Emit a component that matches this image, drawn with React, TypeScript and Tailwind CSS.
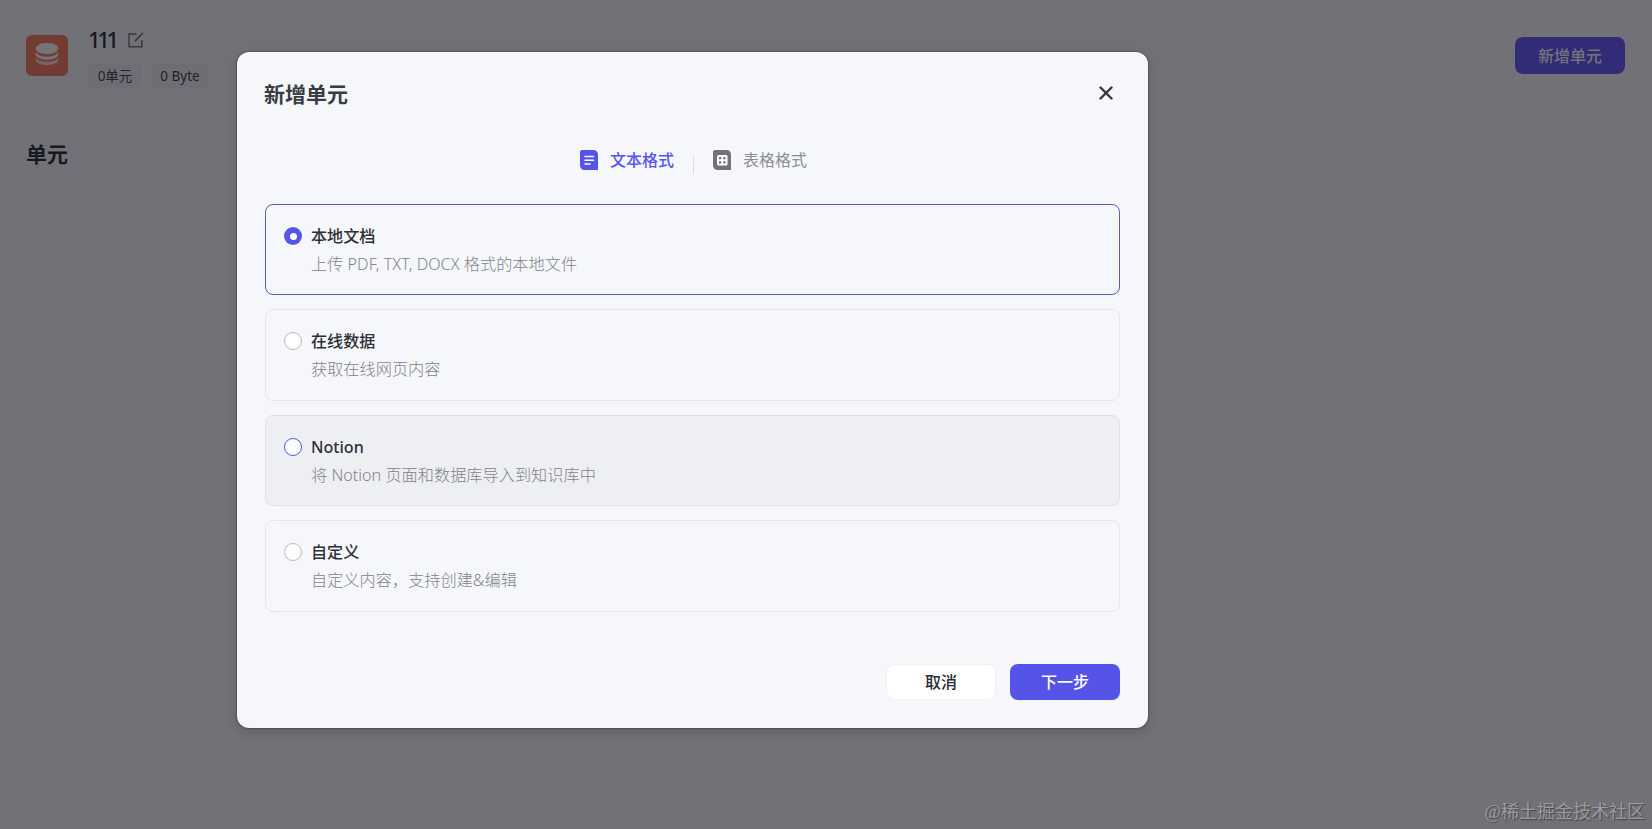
import { useState } from 'react';

interface Source {
  id: string;
  title: string;
  description: string;
}

const sources: Source[] = [
  { id: 'local', title: '本地文档', description: '上传 PDF, TXT, DOCX 格式的本地文件' },
  { id: 'online', title: '在线数据', description: '获取在线网页内容' },
  { id: 'notion', title: 'Notion', description: '将 Notion 页面和数据库导入到知识库中' },
  { id: 'custom', title: '自定义', description: '自定义内容，支持创建&编辑' },
];

function DatabaseIcon() {
  return (
    <svg width="24" height="24" viewBox="0 0 24 24" fill="#fff">
      <ellipse cx="12" cy="6.500" rx="11.300" ry="5.700" />
      <path d="M.7 10c1.600 3.200 5.800 4.700 11.300 4.700s9.700-1.500 11.300-4.700v2.500c0 3-5 5.200-11.300 5.200S.7 15.500.7 12.500z" />
      <path d="M.7 15.800c1.600 2.700 5.800 3.900 11.300 3.900s9.700-1.200 11.300-3.900v2.200c0 2.800-5 5-11.300 5S.7 20.800.7 18z" opacity=".75" />
    </svg>
  );
}

function EditIcon() {
  return (
    <svg width="16" height="16" viewBox="0 0 16 16" fill="none" stroke="#6b6b72" strokeWidth="1.4">
      <path d="M8.500 2H1v12.700h12.800V8" />
      <path d="M7 9.200 14.800 1" strokeWidth="1.800" />
    </svg>
  );
}

function TextIcon() {
  return (
    <svg width="18" height="20" viewBox="0 0 18 20" className="mb-px">
      <path d="M2 0h11q5 0 5 5v15H5q-5 0-5-5V2q0-2 2-2z" fill="#5654e8" />
      <path d="M5 6.500h8.500M5 10.300h8.500M5 14h5" stroke="#fff" strokeWidth="1.600" strokeLinecap="round" />
    </svg>
  );
}

function TableIcon() {
  return (
    <svg width="18" height="20" viewBox="0 0 18 20" className="mb-px">
      <path d="M2 0h11q5 0 5 5v15H5q-5 0-5-5V2q0-2 2-2z" fill="#737377" />
      <rect x="4" y="5" width="10.500" height="10.500" rx="1.500" fill="#fff" />
      <path d="M6 7h2.300v2.300H6zM10.200 7h2.300v2.300h-2.300zM6 11.200h2.300v2.300H6zM10.200 11.200h2.300v2.300h-2.300z" fill="#737377" />
    </svg>
  );
}

function Radio({ checked, hovered }: { checked: boolean; hovered: boolean }) {
  if (checked) {
    return (
      <span className="flex size-[18px] shrink-0 items-center justify-center rounded-full bg-[#5654e8]">
        <span className="size-[7px] rounded-full bg-white" />
      </span>
    );
  }
  return (
    <span
      className={`block size-[18px] shrink-0 rounded-full border bg-white ${
        hovered ? 'border-[#5654e8]' : 'border-[#b9babe]'
      }`}
    />
  );
}

export default function App() {
  const [selected, setSelected] = useState('local');
  const [hovered, setHovered] = useState('notion');

  return (
    <div className="relative h-[829px] overflow-hidden bg-[#fcf9fc] font-['Noto_Sans','Noto_Sans_CJK_SC',sans-serif] text-[#1c1f23]">
      <header className="flex h-[110px] items-start justify-between pl-[26px] pr-[27px]">
        <div className="flex">
          <div className="mt-[35px] flex h-[41px] w-[42px] items-center justify-center rounded-md bg-[#ff7654] pb-1">
            <DatabaseIcon />
          </div>
          <div className="ml-5 pt-[26px]">
            <div className="flex h-[28px] items-center">
              <span className="w-[40px] pb-[2px] text-[22px] font-medium tracking-[-3.300px]">111</span>
              <EditIcon />
            </div>
            <div className="mt-[9px] flex gap-[10px] text-[13.500px] text-[#35373c]">
              <span className="flex h-[25px] w-[54px] items-center justify-center rounded-md bg-[#f3f1f4] pt-px">0单元</span>
              <span className="flex h-[25px] w-[56px] items-center justify-center whitespace-nowrap rounded-md bg-[#f3f1f4] pt-px">
                0 Byte
              </span>
            </div>
          </div>
        </div>
        <button className="mt-[37px] h-[37px] w-[110px] rounded-lg bg-[#5a4dff] text-base font-medium text-white">
          新增单元
        </button>
      </header>
      <h2 className="pl-[26px] pt-[29px] text-[21px] font-bold leading-[30px]">单元</h2>

      <div className="absolute inset-0 bg-[rgba(22,22,30,0.6)]">
        <div className="ml-[237px] mt-[52px] flex h-[676px] w-[911px] flex-col rounded-xl bg-[#f5f7fb] px-7 shadow-[0_0_2px_rgba(0,0,0,0.7),0_4px_14px_rgba(0,0,0,0.15)]">
          <div className="flex items-center justify-between pt-[26px]">
            <h3 className="-ml-px text-[21px] font-bold leading-[32px] text-[#3a3c43]">新增单元</h3>
            <button className="mr-[7px] mb-[2px]">
              <svg width="14" height="14" viewBox="0 0 14 14" stroke="#35373c" strokeWidth="2.400" strokeLinecap="round">
                <path d="M1.500 1.500l11 11M12.500 1.500l-11 11" />
              </svg>
            </button>
          </div>

          <div className="mt-[37px] flex h-[26px] items-center pl-[315px] text-base">
            <TextIcon />
            <span className="ml-3 font-medium text-[#5654e8]">文本格式</span>
            <span className="ml-[19px] mt-[9px] h-[18px] w-px bg-[#dcdde2]" />
            <span className="ml-[19px] flex items-center gap-3 text-[#8d8e93]">
              <TableIcon />
              表格格式
            </span>
          </div>

          <div className="mt-[31px] flex flex-col gap-[14px]">
            {sources.map((item) => (
              <div
                key={item.id}
                onClick={() => setSelected(item.id)}
                onMouseEnter={() => setHovered(item.id)}
                className={`flex h-[91.400px] cursor-pointer gap-[9px] rounded-lg border pl-[18px] pt-[18px] ${
                  selected === item.id
                    ? 'border-[#5f57c8]'
                    : hovered === item.id
                      ? 'border-[#e0e1e5] bg-[#eeeff3]'
                      : 'border-[#e6e7eb]'
                }`}
              >
                <div className="pt-[4px]">
                  <Radio checked={selected === item.id} hovered={hovered === item.id} />
                </div>
                <div>
                  <div className="text-[16.100px] font-medium leading-[26px] text-[#2e3037]">{item.title}</div>
                  <div className="mt-[2px] text-[16.200px] font-light leading-[26px] text-[#838489]">{item.description}</div>
                </div>
              </div>
            ))}
          </div>

          <div className="mt-[52px] flex items-center justify-end gap-[14px] text-base font-medium">
            <button className="h-[36px] w-[110px] rounded-lg border border-[#f1f2f5] bg-white text-[#2b2a35]">取消</button>
            <button className="h-[36px] w-[110px] rounded-lg bg-[#5654e8] text-white">下一步</button>
          </div>
        </div>
      </div>

      <div className="absolute bottom-[3px] right-[7px] font-['Liberation_Serif','Noto_Sans_CJK_SC',serif] text-[18px] leading-[28px] text-[#9c9ba0] [text-shadow:1px_1px_1px_#444]">
        @稀土掘金技术社区
      </div>
    </div>
  );
}
